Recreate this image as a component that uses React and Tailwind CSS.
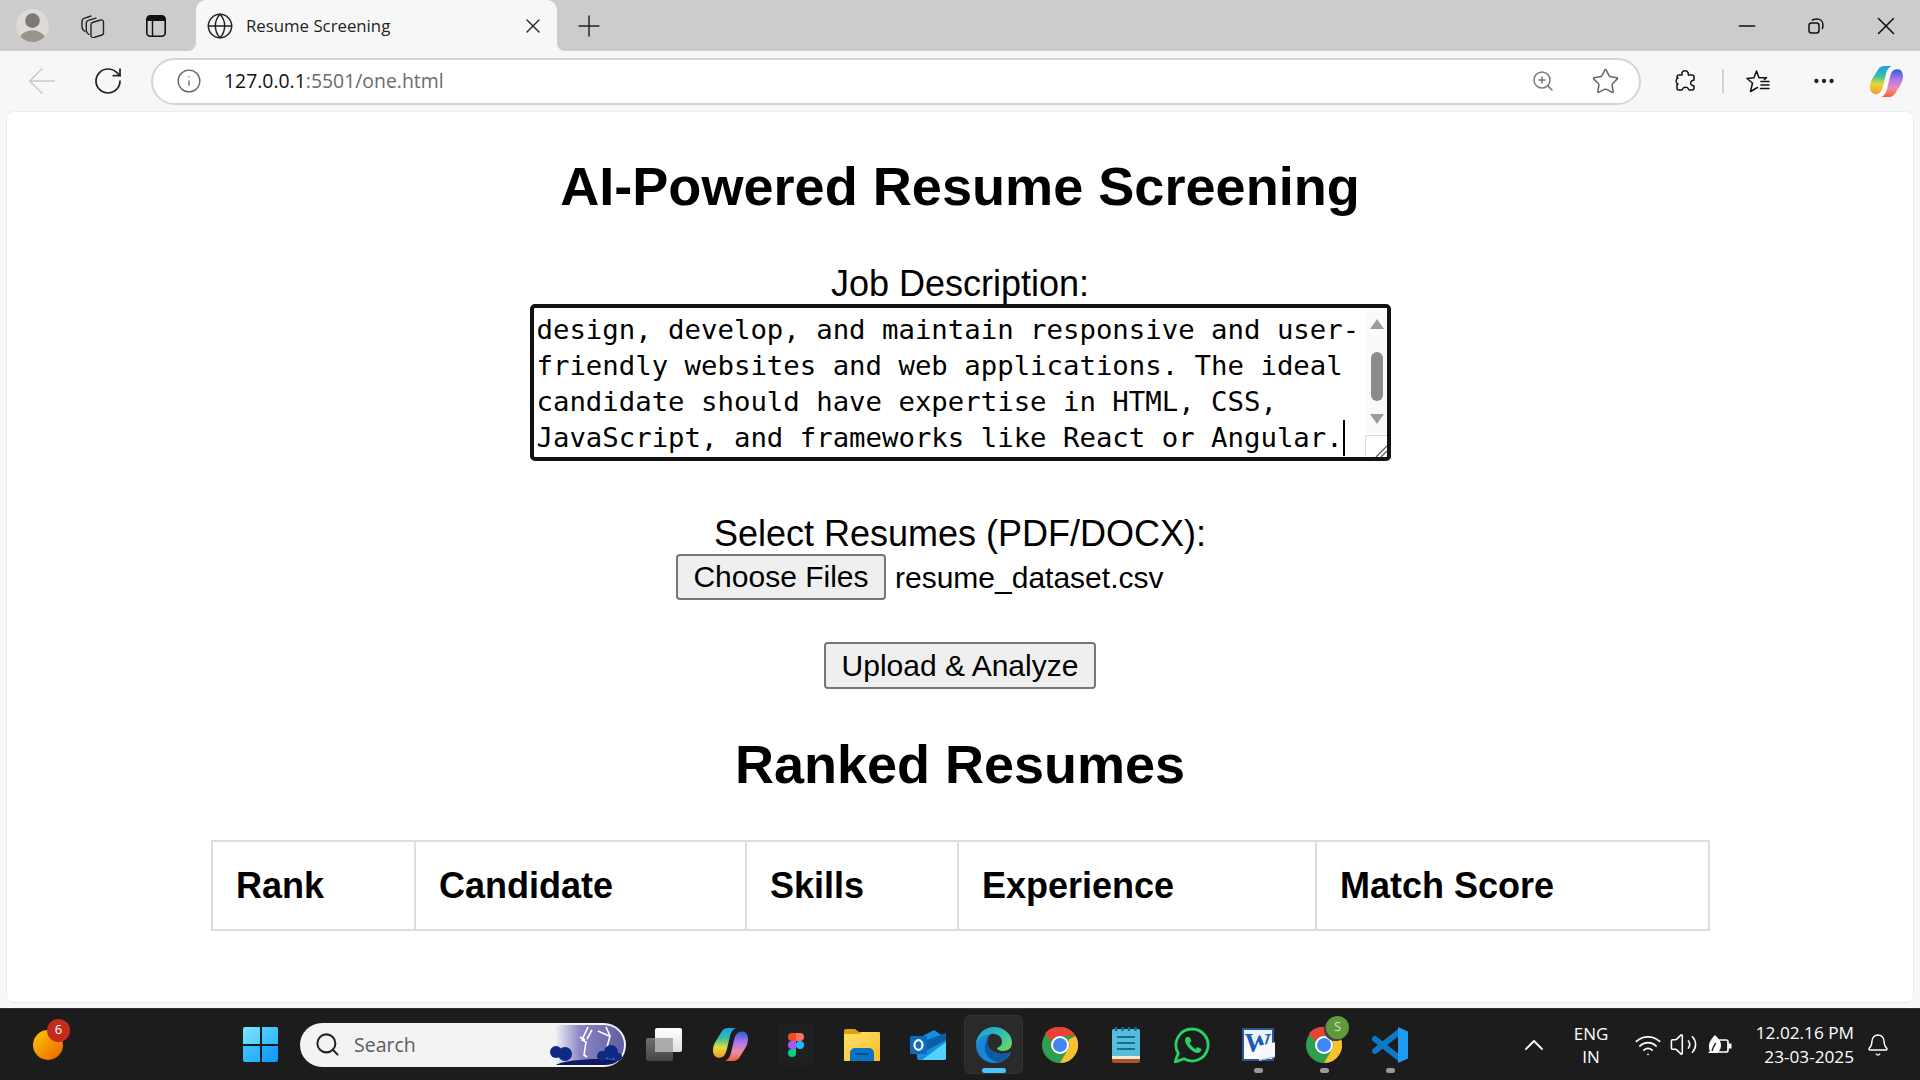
import {
  ArrowLeft, RotateCw, Info, ZoomIn, Star, MoreHorizontal, Minus, X, Plus, Globe, Search, ChevronUp, Wifi, Volume2, Bell,
} from 'lucide-react'

const sans = "font-['Liberation_Sans',Arial,sans-serif]"

const bladePath = 'M8 4C9.5 2 11.5 1 14 1h7c-3 1-4.5 4-5.5 7.5L12.5 21c-1 4-3 7-6.5 7H5c-3 0-5-3-5-6.500 0-3.500 1-6.500 3-9.500z'

function Copilot({ size = 32 }) {
  return (
    <svg width={size} height={size} viewBox="0 0 32 32">
      <defs>
        <linearGradient id="cpLeft" x1="0" y1="0" x2="0" y2="1">
          <stop offset="0" stopColor="#1f9fe8" />
          <stop offset="0.35" stopColor="#36c0a0" />
          <stop offset="0.65" stopColor="#e4d93a" />
          <stop offset="1" stopColor="#f59a28" />
        </linearGradient>
        <linearGradient id="cpRight" x1="0" y1="0" x2="0" y2="1">
          <stop offset="0" stopColor="#f5602c" />
          <stop offset="0.3" stopColor="#f08ba6" />
          <stop offset="0.6" stopColor="#b678ea" />
          <stop offset="1" stopColor="#2a5fd8" />
        </linearGradient>
      </defs>
      <path d={bladePath} fill="url(#cpLeft)" />
      <path d={bladePath} fill="url(#cpRight)" transform="rotate(180 16 16)" />
    </svg>
  )
}

function TabsIcon() {
  return (
    <svg width="24" height="24" viewBox="0 0 24 24" fill="none" stroke="#222" strokeWidth="1.4" strokeLinecap="round">
      <path d="M10 10.500c0-1 .5-1.700 1.500-2l8-2.500c1.500-.4 3 .4 3 2v11c0 1-.5 1.700-1.500 2l-8 2.500c-1.500.4-3-.4-3-2z" />
      <path d="M8 20.500c-1.800-1-2.700-2.300-2.700-4V9c0-1.300.7-2.200 2-2.600L15 4.200" />
      <path d="M4 17.500C2 16.300 1 14.800 1 13V7c0-1.300.7-2.200 2-2.600L10 2" />
    </svg>
  )
}

function VerticalTabsIcon() {
  return (
    <svg width="20" height="22" viewBox="0 0 20 22" fill="none">
      <rect x="0.8" y="0.8" width="18.400" height="20.400" rx="3.500" stroke="#111" strokeWidth="1.600" />
      <path d="M1 4a3 3 0 0 1 3-3h12a3 3 0 0 1 3 3v2H1z" fill="#111" />
      <path d="M6.500 6v15" stroke="#111" strokeWidth="1.400" />
    </svg>
  )
}

function Avatar() {
  return (
    <div className="flex h-[33px] w-[33px] items-center justify-center overflow-hidden rounded-full bg-[#dedbd6]">
      <svg width="33" height="33" viewBox="0 0 34 34">
        <circle cx="17" cy="12" r="7.500" fill="#7d7a74" />
        <ellipse cx="17" cy="31" rx="13" ry="9" fill="#99958e" />
      </svg>
    </div>
  )
}

function Extensions() {
  return (
    <svg width="24" height="24" viewBox="0 0 24 24" fill="none" stroke="#111" strokeWidth="1.500" strokeLinejoin="round">
      <path d="M9 3.500C10 1 14 1 15 3.500L15.500 6H19c1 0 2 1 2 2v3l-1.500.5c-2.500 1-2.500 4 0 5l1.500.5v2c0 1-1 2-2 2h-3l-.5-1c-1-2.500-5-2.500-6 0l-.5 1H6c-1 0-2-1-2-2v-3.500l1-.5c-2.500-1-2.500-5 0-6L4 9V8c0-1 1-2 2-2h3z" />
    </svg>
  )
}

function Favorites() {
  return (
    <svg width="24" height="24" viewBox="0 0 24 24" fill="none" stroke="#111" strokeWidth="1.500" strokeLinejoin="round" strokeLinecap="round">
      <path d="M11.500 18.500L4.500 22.500 6.500 14 1 9.500l7-.7L10.500 2 13 8.800h7.500l-2 1.700" />
      <path d="M15 12.500h8M15 16h8M14.500 19.500h8.500" />
    </svg>
  )
}

function Windows() {
  return (
    <div className="grid h-[35px] w-[35px] grid-cols-2 gap-[2px]">
      <div className="rounded-tl-[2px] bg-gradient-to-br from-[#7be3ff] to-[#4fcfff]" />
      <div className="rounded-tr-[2px] bg-gradient-to-br from-[#52cdfd] to-[#2fb7fc]" />
      <div className="rounded-bl-[2px] bg-gradient-to-br from-[#3fc0ff] to-[#24aeff]" />
      <div className="rounded-br-[2px] bg-gradient-to-br from-[#25aaff] to-[#1099ff]" />
    </div>
  )
}

function WeatherArt() {
  return (
    <svg width="76" height="44" viewBox="0 0 76 44" className="block">
      <defs>
        <linearGradient id="skyG" x1="0" x2="1" y1="0" y2="0">
          <stop offset="0" stopColor="#efeff3" />
          <stop offset="0.35" stopColor="#8a86c4" />
          <stop offset="1" stopColor="#5f5da5" />
        </linearGradient>
      </defs>
      <path d="M6 2h48a20 20 0 0 1 20 20 20 20 0 0 1-20 20H6z" fill="url(#skyG)" />
      <path d="M38 4l-6 13 4 2-2 13 3 2M42 7l-5 9M30 14l5 3M56 4l4 9-3 11 2 1M48 8l11 5" stroke="#fff" strokeWidth="1.600" fill="none" />
      <path d="M6 42c8-6 54-8 62-4-4 3-9 4-14 4z" fill="#0d1a63" />
      <circle cx="6" cy="29" r="6" fill="#0f2a86" />
      <circle cx="15" cy="31" r="7" fill="#0f2a86" />
      <circle cx="52" cy="33" r="5" fill="#0f2a86" />
      <circle cx="61" cy="29" r="7" fill="#0f2a86" />
      <circle cx="68" cy="34" r="4" fill="#0f2a86" />
    </svg>
  )
}

function StackApp() {
  return (
    <svg width="36" height="33" viewBox="0 0 36 33">
      <defs>
        <linearGradient id="stackBack" x1="0" y1="0" x2="0" y2="1">
          <stop offset="0" stopColor="#707070" />
          <stop offset="1" stopColor="#454545" />
        </linearGradient>
        <linearGradient id="stackFront" x1="0" y1="0" x2="0" y2="1">
          <stop offset="0" stopColor="#ffffff" />
          <stop offset="1" stopColor="#dedede" />
        </linearGradient>
      </defs>
      <rect x="0" y="10" width="27" height="23" rx="2" fill="url(#stackBack)" />
      <rect x="9" y="0" width="27" height="24" rx="2" fill="url(#stackFront)" />
      <rect x="9" y="10" width="18" height="14" fill="#ababab" />
    </svg>
  )
}

function Figma() {
  return (
    <svg width="36" height="42" viewBox="0 0 36 42">
      <rect width="36" height="42" rx="4" fill="#202020" />
      <path d="M18 9h-4a4 4 0 0 0 0 8h4z" fill="#f24e1e" />
      <path d="M18 9h4a4 4 0 0 1 0 8h-4z" fill="#ff7262" />
      <path d="M18 17h-4a4 4 0 0 0 0 8h4z" fill="#a259ff" />
      <circle cx="22" cy="21" r="4" fill="#1abcfe" />
      <path d="M14 25h4v4a4 4 0 1 1-4-4z" fill="#0acf83" />
    </svg>
  )
}

function Explorer() {
  return (
    <svg width="36" height="32" viewBox="0 0 36 32">
      <defs>
        <linearGradient id="folderG" x1="0" y1="0" x2="1" y2="1">
          <stop offset="0" stopColor="#ffdf70" />
          <stop offset="1" stopColor="#fbbd22" />
        </linearGradient>
      </defs>
      <path d="M0 2a2 2 0 0 1 2-2h9l4 3h21v6H0z" fill="#d9a20f" />
      <path d="M0 5h15l3-2h16a2 2 0 0 1 2 2v27H0z" fill="url(#folderG)" />
      <path d="M6 32v-8a5 5 0 0 1 5-5h14a5 5 0 0 1 5 5v8z" fill="#0a74c4" />
      <rect x="11" y="24" width="14" height="1.800" fill="#0a4f8e" />
    </svg>
  )
}

function Outlook() {
  return (
    <svg width="36" height="30" viewBox="0 0 36 30">
      <path d="M7 9L24 0l12 8v20a2 2 0 0 1-2 2H9a2 2 0 0 1-2-2z" fill="#1490df" />
      <path d="M12 30l24-18v16a2 2 0 0 1-2 2z" fill="#4fd3fa" />
      <path d="M14 11L36 3v7L16 21z" fill="#0a5fa8" />
      <rect x="0" y="6" width="17" height="18" rx="1.500" fill="#0f6cbd" />
      <ellipse cx="8.500" cy="15" rx="4" ry="4.800" fill="none" stroke="#fff" strokeWidth="2.200" />
    </svg>
  )
}

function Edge() {
  return (
    <svg width="36" height="36" viewBox="0 0 36 36">
      <defs>
        <linearGradient id="edgeG" x1="0" y1="0" x2="1" y2="0.800">
          <stop offset="0" stopColor="#1a9ade" />
          <stop offset="0.6" stopColor="#35c1b0" />
          <stop offset="1" stopColor="#6ad85f" />
        </linearGradient>
      </defs>
      <path d="M0 18C1 10 8 7 15 7c-4 3-5 7-3 12 3 7 14 10 23 6-2 6-8 11-17 11C8 36 0 28 0 18z" fill="#1a86d6" />
      <path d="M15 10c-5 3-7 7-6 13 1 6 6 11 13 12 6-1 10-5 13-10-9 4-20 1-23-6-1-3-1-6 3-9z" fill="#0e5aa2" />
      <path d="M18 0c10 0 18 7 18 16 0 5-4 8-9 8-3 0-6-1-6-3 3-1 5-3 5-6 0-5-4-9-11-8C8 8 2 11 0 18 0 8 8 0 18 0z" fill="url(#edgeG)" />
    </svg>
  )
}

function Chrome({ size = 36 }) {
  return (
    <svg width={size} height={size} viewBox="0 0 36 36">
      <circle cx="18" cy="18" r="18" fill="#2f9e4f" />
      <path d="M18 0a18 18 0 0 1 15.600 9H18a9 9 0 0 0-8.400 5.600L3 6.500A18 18 0 0 1 18 0z" fill="#ea4335" />
      <path d="M33.600 9A18 18 0 0 1 18 36l7.800-13.500A9 9 0 0 0 26 13z" fill="#fbc02d" />
      <circle cx="18" cy="18" r="9" fill="#fff" />
      <circle cx="18" cy="18" r="7" fill="#4285f4" />
    </svg>
  )
}

function Notepad() {
  return (
    <svg width="28" height="36" viewBox="0 0 28 36">
      <rect y="2" width="28" height="28" rx="1.500" fill="#58bcdc" />
      <rect y="29" width="28" height="3" fill="#f1e6da" />
      <path d="M0 32h28v2a2 2 0 0 1-2 2H2a2 2 0 0 1-2-2z" fill="#a8561c" />
      <path d="M4 0v4M10.500 0v4M17 0v4M23.500 0v4" stroke="#136e94" strokeWidth="2.400" />
      <path d="M5 10h18M5 16h18M5 22h18" stroke="#17708f" strokeWidth="2.200" />
    </svg>
  )
}

function WhatsApp() {
  return (
    <svg width="36" height="36" viewBox="0 0 36 36">
      <path d="M18 2a16 16 0 0 0-13.700 24.300L1 35l9-3.200A16 16 0 1 0 18 2z" fill="none" stroke="#25d366" strokeWidth="2.800" />
      <path d="M12.500 10c-2 2-2 5 1 9s7 7 10 7c2 0 4-2 4-4l-4-2-2 2c-2-1-5-4-6-6l2-2-2-4z" fill="#25d366" />
    </svg>
  )
}

function Word() {
  return (
    <div className="relative h-[33px] w-[33px]">
      <div className="h-[33px] w-[32px] border-2 border-[#2a5699] bg-gradient-to-b from-[#e8f0fa] to-white" />
      <div className="absolute left-[3px] top-[2px] font-['Liberation_Serif',serif] text-[27px] font-bold leading-none text-[#1b5cb5]">W</div>
      <div className="absolute bottom-[2px] right-0 h-[15px] w-[16px] -skew-y-12 border-b border-[#9db6d6] bg-[#f6f8fc]" />
    </div>
  )
}

function VsCode() {
  return (
    <svg width="36" height="36" viewBox="0 0 36 36">
      <path d="M3 12l24 19M3 24L27 5" stroke="#0e78c8" strokeWidth="6" strokeLinecap="round" />
      <path d="M26 0l10 4.500v27L26 36V27l0-18z" fill="#1f9cf0" />
    </svg>
  )
}

function Slot({ children, dot, active }) {
  return (
    <div className="relative flex h-[59px] w-[66px] items-center justify-center">
      {active && <div className="absolute inset-y-0 left-[3px] right-[4px] rounded-[6px] border border-[#333] bg-[#2a2a2a]" />}
      <div className="relative flex items-center justify-center">{children}</div>
      {dot && <div className="absolute bottom-[1px] h-[5px] w-[9px] rounded-full bg-[#9a9a9a]" />}
      {active && <div className="absolute bottom-[1px] h-[5px] w-[24px] rounded-full bg-[#4cc2ff]" />}
    </div>
  )
}

function Taskbar() {
  return (
    <footer className="flex h-[72px] items-center border-t border-[#333] bg-[#1c1c1c] font-['Open_Sans',sans-serif] text-white">
      <div className="relative ml-[33px] h-[30px] w-[30px]">
        <div className="absolute h-[30px] w-[30px] rounded-full bg-gradient-to-br from-[#ffc800] to-[#e85d00]" />
        <div className="absolute left-[14px] top-[-11px] flex h-[23px] w-[23px] items-center justify-center rounded-full bg-[#c42b1c] text-[13px]">6</div>
      </div>

      <div className="ml-[180px]"><Windows /></div>

      <div className="ml-[22px] flex h-[44px] w-[326px] items-center overflow-hidden rounded-full bg-[#f3f3f3] pl-[14px] text-[#5d5d5d]">
        <Search size={27} strokeWidth={1.800} color="#222" />
        <span className="ml-[13px] flex-1 text-[19.500px]">Search</span>
        <WeatherArt />
      </div>

      <div className="ml-[5px] flex items-center">
        <Slot><StackApp /></Slot>
        <Slot><Copilot size={35} /></Slot>
        <Slot><Figma /></Slot>
        <Slot><Explorer /></Slot>
        <Slot><Outlook /></Slot>
        <Slot active><Edge /></Slot>
        <Slot><Chrome /></Slot>
        <Slot><Notepad /></Slot>
        <Slot><WhatsApp /></Slot>
        <Slot dot><Word /></Slot>
        <Slot dot>
          <Chrome />
          <div className="absolute right-[-7px] top-[-11px] flex h-[23px] w-[23px] items-center justify-center rounded-full bg-[#5f9a3c] text-[13px] text-[#cfe8b8] shadow-[-2px_2px_0_#444]">S</div>
        </Slot>
        <Slot dot><VsCode /></Slot>
      </div>

      <ChevronUp size={32} strokeWidth={1.400} className="ml-[95px]" />
      <div className="ml-[21px] w-[40px] text-center text-[17px] leading-[23px]">
        <div>ENG</div>
        <div>IN</div>
      </div>
      <Wifi size={28} strokeWidth={1.500} className="ml-[23px]" />
      <Volume2 size={29} strokeWidth={1.300} className="ml-[7px]" />
      <svg width="24" height="22" viewBox="0 0 24 22" fill="none" className="ml-[10px]">
        <rect x="7" y="6" width="13" height="12" rx="2" stroke="#fff" strokeWidth="1.700" />
        <path d="M20.500 9.500h3v5h-3z" fill="#fff" />
        <path d="M0 19h9c3-2 4-5 4-8 0-4-3-7-6-10C4 4 1 8 1 12c0 2 0 4 1 5z" fill="#fff" />
        <path d="M4 17c1-3 2-6 4-8" stroke="#1c1c1c" strokeWidth="1.300" />
      </svg>
      <div className="ml-[22px] w-[100px] whitespace-nowrap text-right text-[17.200px] leading-[24px]">
        <div>12.02.16 PM</div>
        <div>23-03-2025</div>
      </div>
      <Bell size={24} strokeWidth={1.400} className="ml-[12px]" />
    </footer>
  )
}

function BrowserChrome() {
  return (
    <>
      <div className="flex h-[51px] items-center bg-[#cccccc] font-['Open_Sans',sans-serif]">
        <div className="ml-[16px]"><Avatar /></div>
        <div className="ml-[32px]"><TabsIcon /></div>
        <div className="ml-[41px]"><VerticalTabsIcon /></div>
        <div className="relative ml-[30px] flex h-[51px] w-[361px] items-center rounded-t-[10px] bg-[#f7f7f7] pl-[10px] pr-[12px] text-[#222]">
          <Globe size={28} strokeWidth={1.250} />
          <span className="ml-[12px] flex-1 text-[16.800px]">Resume Screening</span>
          <X size={24} strokeWidth={1.400} />
          <div className="absolute bottom-0 left-[-8px] h-[8px] w-[8px] bg-[#f7f7f7]">
            <div className="h-full w-full rounded-br-[8px] bg-[#cccccc]" />
          </div>
          <div className="absolute bottom-0 right-[-8px] h-[8px] w-[8px] bg-[#f7f7f7]">
            <div className="h-full w-full rounded-bl-[8px] bg-[#cccccc]" />
          </div>
        </div>
        <Plus size={34} strokeWidth={1.050} color="#222" className="ml-[15px]" />
        <Minus size={26} strokeWidth={1.500} color="#111" className="ml-auto" />
        <svg width="16" height="16" viewBox="0 0 16 16" fill="none" stroke="#111" strokeWidth="1.500" className="ml-[48px]">
          <rect x="1" y="5" width="10" height="10" rx="2.500" />
          <path d="M4 2.500C5 1 7 1 9 1c3 0 6 2 6 6 0 2 0 3-1 4" />
        </svg>
        <X size={30} strokeWidth={1.250} color="#111" className="ml-[47px] mr-[19px]" />
      </div>

      <div className="flex h-[60px] items-center bg-[#f7f7f7] font-['Open_Sans',sans-serif]">
        <ArrowLeft size={42} strokeWidth={0.850} color="#c9c9c9" className="ml-[21px]" />
        <RotateCw size={32} strokeWidth={1.300} color="#222" className="ml-[29px]" />
        <div className="ml-[27px] flex h-[47px] w-[1490px] items-center rounded-full border-2 border-[#d4d4d4] bg-white pl-[23px] pr-[19px]">
          <Info size={26} strokeWidth={1.250} color="#666" />
          <span className="ml-[22px] flex-1 text-[19.400px]">
            <span className="text-[#111]">127.0.0.1</span>
            <span className="text-[#6b6b6b]">:5501/one.html</span>
          </span>
          <ZoomIn size={24} strokeWidth={1.500} color="#777" />
          <Star size={29} strokeWidth={1.250} color="#666" className="ml-[36px]" />
        </div>
        <div className="ml-[32px]"><Extensions /></div>
        <div className="ml-[25px] h-[24px] w-[2px] bg-[#d2d2d2]" />
        <div className="ml-[22px]"><Favorites /></div>
        <MoreHorizontal size={26} strokeWidth={2} color="#222" className="ml-[41px]" />
        <div className="ml-[33px]"><Copilot size={33} /></div>
      </div>
    </>
  )
}

function JobDescription() {
  return (
    <div className="relative h-[157px] w-[861px] overflow-hidden rounded-[5px] border-4 border-[#111] bg-white pl-[3px] pt-[4px] text-left font-['DejaVu_Sans_Mono',monospace] text-[27.330px] leading-[36px] whitespace-pre text-black">
      <div>design, develop, and maintain responsive and user-</div>
      <div>friendly websites and web applications. The ideal</div>
      <div>candidate should have expertise in HTML, CSS,</div>
      <div className="flex items-center">JavaScript, and frameworks like React or Angular.<span className="h-[36px] w-[2px] bg-black" /></div>

      <div className="absolute bottom-0 right-0 top-0 flex w-[20px] flex-col items-center bg-[#fafafa]">
        <div className="mt-[11px] h-0 w-0 border-x-[7px] border-b-[10px] border-x-transparent border-b-[#9c9c9c]" />
        <div className="mt-[23px] h-[49px] w-[12px] rounded-full bg-[#8b8b8b]" />
        <div className="mt-[13px] h-0 w-0 border-x-[7px] border-t-[10px] border-x-transparent border-t-[#9c9c9c]" />
        <div className="absolute bottom-0 right-0 h-[22px] w-[22px] border-l border-t border-[#dcdcdc] bg-white">
          <svg width="12" height="12" viewBox="0 0 12 12" className="absolute bottom-0 right-0" stroke="#555" strokeWidth="1.200">
            <path d="M1 12L12 1M6 12l6-6" />
          </svg>
        </div>
      </div>
    </div>
  )
}

function NativeButton({ children, className }) {
  return (
    <button className={`rounded-[4px] border-2 border-[#767676] bg-[#efefef] text-[30px] leading-none text-black ${className}`}>
      {children}
    </button>
  )
}

const columns = [
  { name: 'Rank', width: 'w-[203px]' },
  { name: 'Candidate', width: 'w-[331px]' },
  { name: 'Skills', width: 'w-[212px]' },
  { name: 'Experience', width: 'w-[358px]' },
  { name: 'Match Score', width: 'w-[393px]' },
]

export default function App() {
  return (
    <div className={`flex h-screen flex-col overflow-hidden bg-[#f7f7f7] ${sans}`}>
      <BrowserChrome />
      <main className="mx-[6px] flex h-[892px] flex-col items-center rounded-[8px] border border-[#ececec] bg-white text-black">
        <h1 className="mt-[38px] text-[54.100px] font-bold leading-[72px]">AI-Powered Resume Screening</h1>
        <label className="mt-[41px] text-[36px] leading-[41px]">Job Description:</label>
        <JobDescription />
        <label className="mt-[52px] text-[36px] leading-[41px]">Select Resumes (PDF/DOCX):</label>
        <div className="flex items-center self-start pl-[669px]">
          <NativeButton className="h-[46px] w-[210px]">Choose Files</NativeButton>
          <span className="ml-[9px] text-[30px]">resume_dataset.csv</span>
        </div>
        <NativeButton className="mt-[42px] h-[47px] w-[272px]">Upload &amp; Analyze</NativeButton>
        <h2 className="mt-[42px] text-[54px] font-bold leading-[66px]">Ranked Resumes</h2>
        <table className="mt-[43px] w-[1497px] table-fixed border-collapse">
          <thead>
            <tr>
              {columns.map((col) => (
                <th key={col.name} className={`${col.width} h-[89px] border-2 border-[#dddddd] pl-[23.500px] text-left text-[36px] font-bold`}>
                  {col.name}
                </th>
              ))}
            </tr>
          </thead>
        </table>
      </main>
      <div className="h-[5px]" />
      <Taskbar />
    </div>
  )
}
